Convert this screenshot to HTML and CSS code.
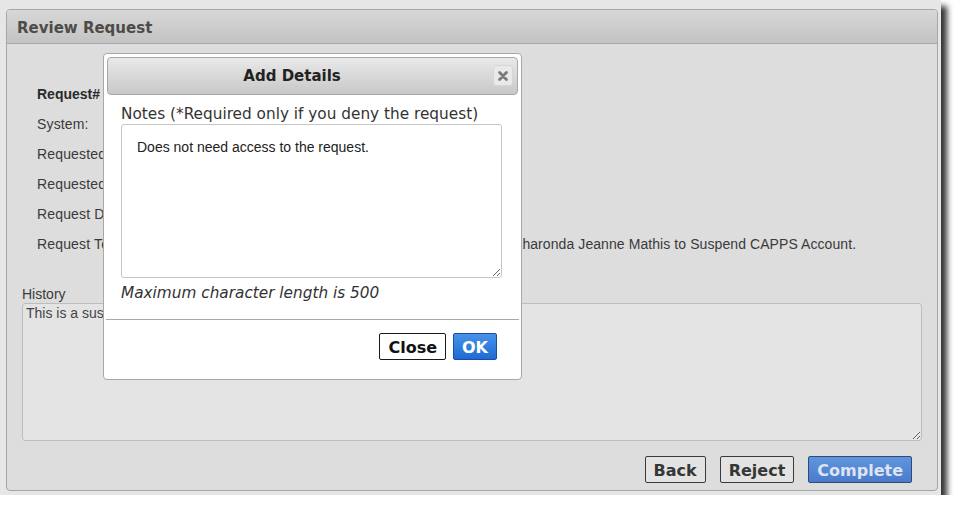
FILE: index.html
```html
<!DOCTYPE html>
<html lang="en">
<head>
<meta charset="utf-8">
<title>Review Request</title>
<link rel="stylesheet" href="styles.css">
</head>
<body>
<div class="stage">
  <section class="panel">
    <header class="panel-head"><h1 class="panel-title">Review Request</h1></header>
    <div class="panel-body">
      <div class="details">
        <div class="label strong">Request#</div><div class="value"></div>
        <div class="label">System:</div><div class="value"></div>
        <div class="label">Requested By:</div><div class="value"></div>
        <div class="label">Requested For:</div><div class="value"></div>
        <div class="label">Request Date:</div><div class="value"></div>
        <div class="label">Request Text:</div><div class="value">Request to suspend user access submitted on behalf of Sharonda Jeanne Mathis to Suspend CAPPS Account.</div>
      </div>
      <div class="history">
        <label class="history-label" for="hist">History</label>
        <textarea id="hist" class="history-box" readonly>This is a suspend request.</textarea>
      </div>
      <div class="actions">
        <button class="btn btn-plain">Back</button>
        <button class="btn btn-plain">Reject</button>
        <button class="btn btn-primary-dim">Complete</button>
      </div>
    </div>
  </section>

  <div class="dialog" role="dialog">
    <div class="dialog-head">
      <span class="dialog-title">Add Details</span>
      <span class="dialog-close" aria-label="close">
        <svg width="10" height="10" viewBox="0 0 10 10"><path d="M1.6 1.6L8.4 8.4M8.4 1.6L1.6 8.4" stroke="#7a7a7a" stroke-width="2.8" stroke-linecap="round"/></svg>
      </span>
    </div>
    <div class="dialog-body">
      <label class="notes-label" for="notes">Notes (*Required only if you deny the request)</label>
      <textarea id="notes" class="notes-box">Does not need access to the request.</textarea>
      <p class="hint">Maximum character length is 500</p>
    </div>
    <div class="dialog-foot">
      <button class="btn btn-white">Close</button>
      <button class="btn btn-primary">OK</button>
    </div>
  </div>
</div>
</body>
</html>
```
FILE: styles.css
```css
html, body {
  margin: 0;
  padding: 0;
  background: #ffffff;
}

.stage {
  position: relative;
  width: 941px;
  height: 495px;
  background: #e6e6e6;
  box-shadow: 6px 6px 6px rgba(0, 0, 0, 0.8);
  padding: 9px 0 0 6px;
  box-sizing: border-box;
  font-family: "Liberation Sans", Arial, sans-serif;
}

.panel {
  width: 932px;
  height: 482px;
  box-sizing: border-box;
  border: 1px solid #a6a6a6;
  border-radius: 4px;
  background: #dddddd;
  display: flex;
  flex-direction: column;
  overflow: hidden;
}

.panel-head {
  height: 34px;
  box-sizing: border-box;
  border-bottom: 1px solid #a9a9a9;
  background: linear-gradient(#d7d7d7, #c3c3c3);
  display: flex;
  align-items: center;
  padding-left: 10px;
}

.panel-title {
  margin: 0;
  font-family: "DejaVu Sans", Verdana, sans-serif;
  font-weight: bold;
  font-size: 15px;
  color: #4e4b48;
  position: relative;
  top: 1px;
}

.panel-body {
  flex: 1;
  padding: 0 15px;
  display: flex;
  flex-direction: column;
}

.details {
  margin-top: 35px;
  padding-left: 15px;
  display: grid;
  grid-template-columns: 123px 1fr;
  font-size: 14px;
  line-height: 30px;
  color: #3a3a3a;
}

.label {
  letter-spacing: 0.15px;
}

.label.strong {
  font-weight: bold;
  color: #2a2a2a;
  letter-spacing: 0;
}

.value {
  white-space: nowrap;
  letter-spacing: 0.08px;
}

.history {
  margin-top: 27px;
  display: flex;
  flex-direction: column;
}

.history-label {
  font-size: 14px;
  line-height: 16px;
  color: #3c3c3c;
}

.history-box {
  margin-top: 1px;
  height: 138px;
  box-sizing: border-box;
  border: 1px solid #bdbdbd;
  border-radius: 3px;
  background: #e4e4e4;
  padding: 1px 3px;
  font-family: "Liberation Sans", Arial, sans-serif;
  font-size: 14px;
  line-height: 16px;
  color: #444444;
  resize: both;
  outline: none;
}

.actions {
  margin-top: 15px;
  padding-right: 10px;
  display: flex;
  justify-content: flex-end;
  gap: 14px;
}

.btn {
  font-family: "DejaVu Sans", Verdana, sans-serif;
  font-weight: bold;
  font-size: 16px;
  line-height: 19px;
  padding: 4px 8px 2px;
  border-radius: 2px;
  margin: 0;
  cursor: pointer;
}

.btn-plain {
  background: #e3e3e3;
  border: 1px solid #3a3a3a;
  color: #363636;
}

.btn-primary-dim {
  background: linear-gradient(#5f96de, #4a7bcb);
  border: 1px solid #2e4b78;
  color: #dde4f0;
}

.btn-white {
  background: #ffffff;
  border: 1px solid #1a1a1a;
  color: #111111;
}

.btn-primary {
  background: linear-gradient(#4793ea, #1f6ad5);
  border: 1px solid #1b4d98;
  color: #ffffff;
}

/* dialog overlay */
.dialog {
  position: absolute;
  left: 103px;
  top: 53px;
  width: 419px;
  height: 327px;
  box-sizing: border-box;
  border: 1px solid #a8a8a8;
  border-radius: 4px;
  background: #ffffff;
  padding: 3px;
  display: flex;
  flex-direction: column;
}

.dialog-head {
  position: relative;
  height: 38px;
  box-sizing: border-box;
  border: 1px solid #a8a8a8;
  border-radius: 4px;
  background: linear-gradient(#e9e9e9, #c8c8c8);
  display: flex;
  align-items: center;
}

.dialog-title {
  width: 90%;
  text-align: center;
  font-family: "DejaVu Sans", Verdana, sans-serif;
  font-weight: bold;
  font-size: 15px;
  color: #222222;
}

.dialog-close {
  position: absolute;
  right: 4px;
  top: 7px;
  width: 20px;
  height: 21px;
  box-sizing: border-box;
  border: 1px solid #d6d6d6;
  border-radius: 3px;
  background: #e9e9e9;
  display: flex;
  align-items: center;
  justify-content: center;
}

.dialog-body {
  padding: 0 15px 0 14px;
  display: flex;
  flex-direction: column;
}

.notes-label {
  margin-top: 10px;
  font-family: "DejaVu Sans", Verdana, sans-serif;
  font-size: 15.3px;
  line-height: 18px;
  color: #333333;
}

.notes-box {
  margin-top: 1px;
  width: 381px;
  height: 154px;
  box-sizing: border-box;
  border: 1px solid #c6c6c6;
  border-radius: 3px;
  padding: 14px 15px;
  font-family: "Liberation Sans", Arial, sans-serif;
  font-size: 14px;
  line-height: 16px;
  color: #222222;
  resize: both;
  outline: none;
}

.hint {
  margin: 6px 0 0;
  font-family: "DejaVu Sans", Verdana, sans-serif;
  font-style: italic;
  font-size: 15.3px;
  line-height: 18px;
  color: #333333;
}

.dialog-foot {
  margin: 17px -1px 0;
  border-top: 1px solid #a9a9a9;
  padding: 13px 22px 0 0;
  display: flex;
  justify-content: flex-end;
  gap: 7px;
}
```
